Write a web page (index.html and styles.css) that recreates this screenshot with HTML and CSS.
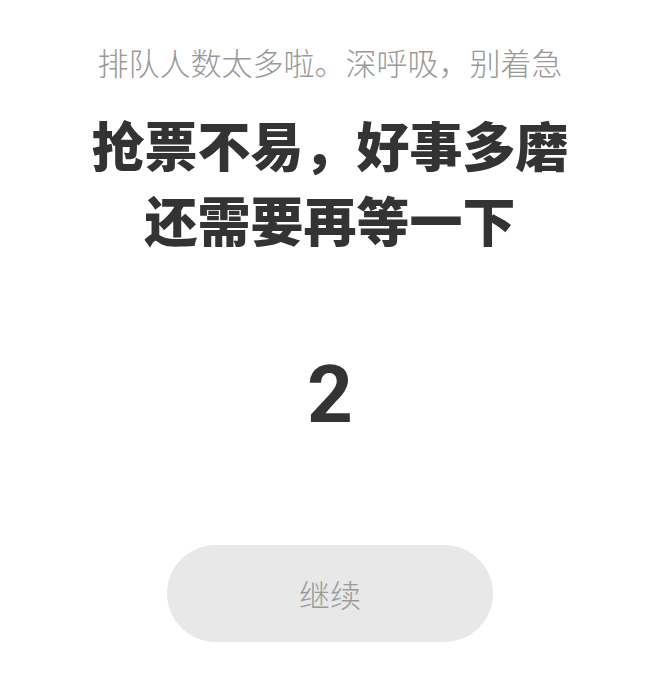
FILE: index.html
```html
<!DOCTYPE html>
<html lang="zh-CN">
<head>
<meta charset="utf-8">
<title>排队中</title>
<link rel="stylesheet" href="styles.css">
</head>
<body>
<main class="queue">
  <p class="queue-tip">排队人数太多啦。深呼吸，别着急</p>
  <h1 class="queue-title">抢票不易，好事多磨<br>还需要再等一下</h1>
  <div class="queue-count">2</div>
  <button class="queue-btn" type="button">继续</button>
</main>
</body>
</html>
```

FILE: styles.css
```css
html, body {
  margin: 0;
  padding: 0;
  background: #ffffff;
}

body {
  font-family: "Noto Sans CJK SC", "Noto Sans", sans-serif;
  width: 660px;
  height: 688px;
  overflow: hidden;
}

.queue {
  display: flex;
  flex-direction: column;
  align-items: center;
  padding-top: 42px;
}

.queue-tip {
  margin: 0;
  font-size: 31px;
  line-height: 40px;
  font-weight: 300;
  color: #999999;
}

.queue-title {
  margin: 25px 0 0;
  font-size: 53px;
  line-height: 75px;
  font-weight: 900;
  color: #333333;
  text-align: center;
}

.queue-count {
  margin-top: 98px;
  font-family: Roboto, "Noto Sans", sans-serif;
  font-size: 80px;
  line-height: 80px;
  font-weight: 700;
  color: #333333;
}

.queue-btn {
  margin-top: 110px;
  width: 326px;
  height: 97px;
  border: none;
  border-radius: 49px;
  background: #e8e8e8;
  color: #9a9a9a;
  font-family: "Noto Sans CJK SC", sans-serif;
  font-size: 31px;
  font-weight: 300;
  padding: 0;
}
```
